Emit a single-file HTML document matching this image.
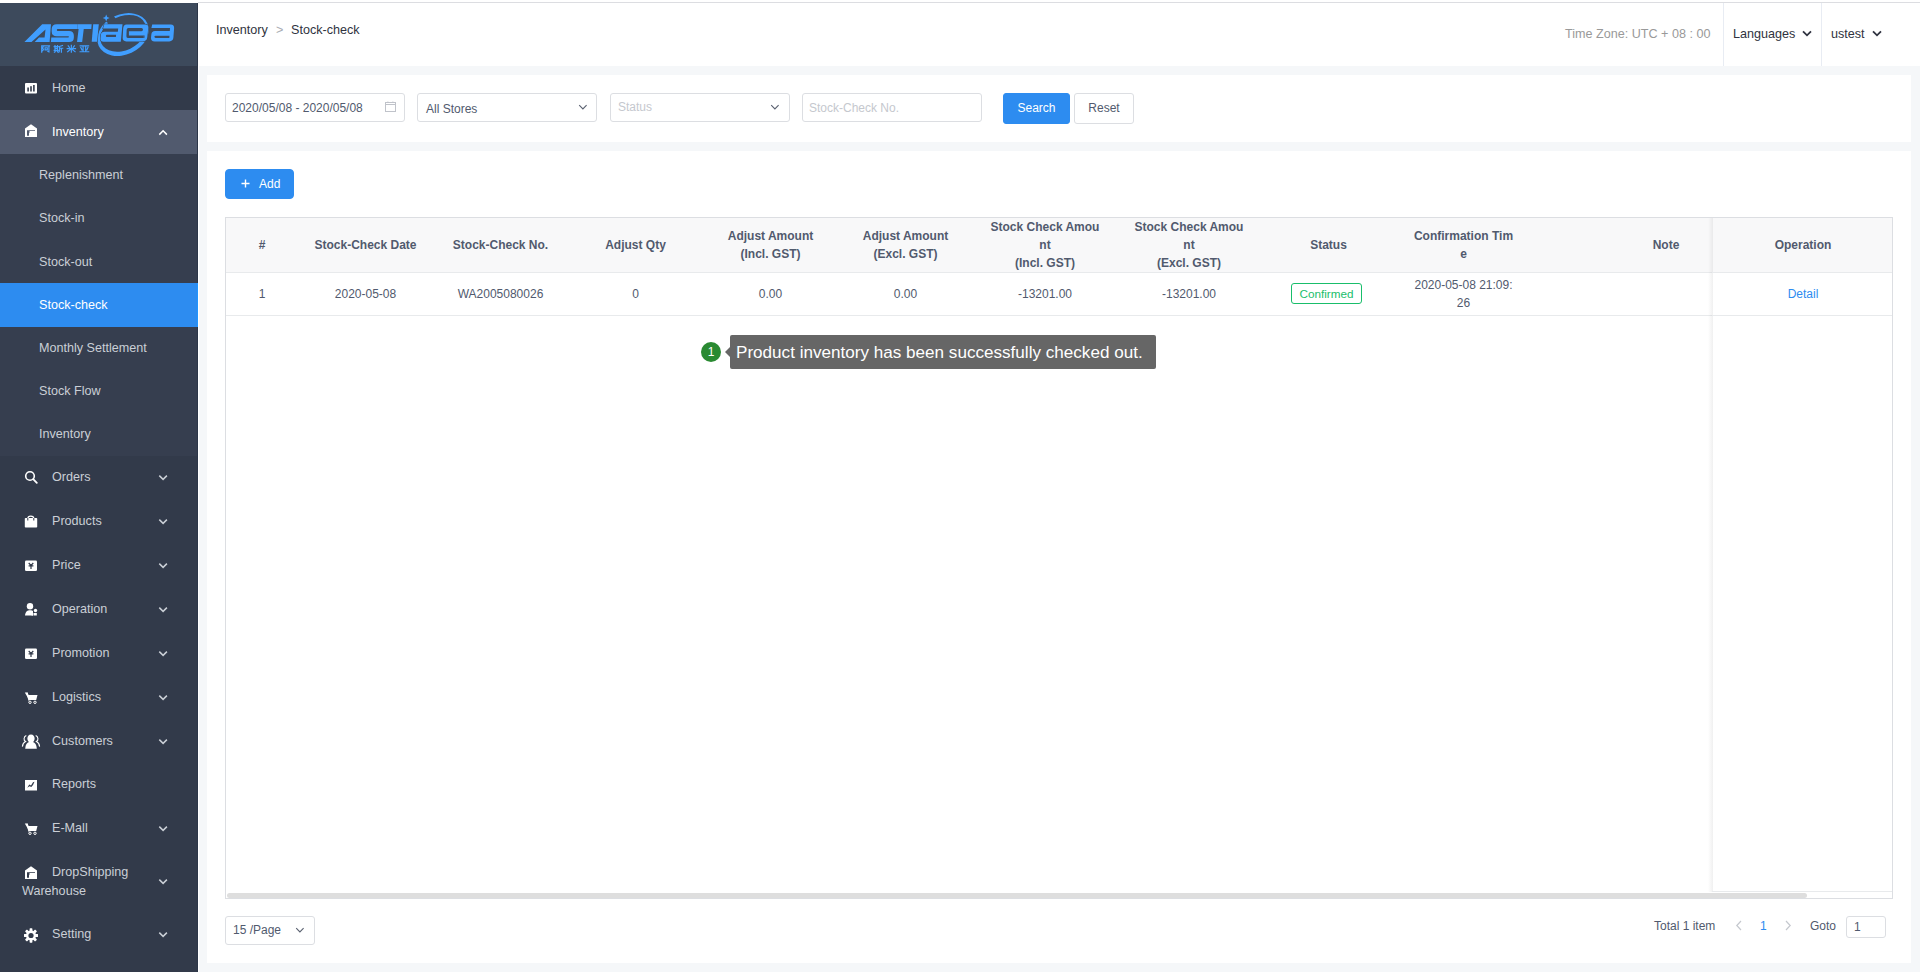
<!DOCTYPE html>
<html><head><meta charset="utf-8"><style>
*{box-sizing:border-box;margin:0;padding:0}
html,body{width:1920px;height:972px;overflow:hidden;background:#f5f7f9;font-family:"Liberation Sans",sans-serif;position:relative}
.a{position:absolute;white-space:nowrap}
.mt{position:absolute;font-size:12.6px;line-height:15px;color:#cacfd6}
</style></head><body>
<div class="a" style="left:0;top:0;width:1920px;height:3px;background:#fff"></div>
<div class="a" style="left:198px;top:2px;width:1722px;height:1px;background:#dcdde1"></div>
<div class="a" style="left:0;top:3px;width:198px;height:969px;background:#323a4a"></div>
<div class="a" style="left:0;top:3px;width:198px;height:63px;background:#3d4a5c"></div>
<div class="a" style="left:0;top:110px;width:198px;height:44px;background:#515a6e"></div>
<div class="a" style="left:0;top:154px;width:198px;height:302px;background:#363e4f"></div>
<div class="a" style="left:0;top:283px;width:198px;height:44px;background:#2d8cf0"></div>
<div class="a" style="left:197px;top:3px;width:1px;height:969px;background:#2c3648"></div>
<div class="a" style="left:197px;top:283px;width:1px;height:44px;background:#2196ff"></div>
<div class="a" style="left:198px;top:3px;width:1px;height:969px;background:#ffffff"></div>
<svg class="a" style="left:24px;top:80.5px" width="14" height="15" viewBox="0 0 14 15"><rect x="1" y="2" width="12" height="10.5" rx="1" fill="#fff"/><rect x="3.3" y="6.5" width="1.6" height="4" fill="#323a4a"/><rect x="6.2" y="5.2" width="1.6" height="5.3" fill="#323a4a"/><rect x="9.1" y="4" width="1.6" height="6.5" fill="#323a4a"/></svg><div class="mt" style="left:52px;top:80.6px;color:#cacfd6">Home</div>
<svg class="a" style="left:24px;top:123.0px" width="14" height="15" viewBox="0 0 14 15"><path d="M1 5.4 L7 1.3 L13 5.4 V14 H1 Z" fill="#fff"/><path d="M3 7.2 H11 V8 H5.5 V9.8 H5 V12.8 H3 Z" fill="#515a6e"/></svg><div class="mt" style="left:52px;top:124.6px;color:#ffffff">Inventory</div><svg class="a" style="left:158px;top:129.3px" width="10" height="7" viewBox="0 0 10 7"><path d="M1.3 5.6 L5.1 1.8 L8.9 5.6" fill="none" stroke="#ffffff" stroke-width="1.5"/></svg>
<svg class="a" style="left:24px;top:469.5px" width="14" height="15" viewBox="0 0 14 15"><circle cx="6" cy="6" r="4.3" fill="none" stroke="#fff" stroke-width="1.6"/><path d="M9.2 9.2 L12.8 12.8" stroke="#fff" stroke-width="1.8" stroke-linecap="round"/></svg><div class="mt" style="left:52px;top:469.6px;color:#cacfd6">Orders</div><svg class="a" style="left:158px;top:474.0px" width="10" height="7" viewBox="0 0 10 7"><path d="M1.3 1.6 L5.1 5.4 L8.9 1.6" fill="none" stroke="#cacfd6" stroke-width="1.5"/></svg>
<svg class="a" style="left:24px;top:513.5px" width="14" height="15" viewBox="0 0 14 15"><rect x="0.8" y="4" width="12.4" height="9.5" rx="0.8" fill="#fff"/><path d="M3.8 7 V4.5 C3.8 1.2 9.8 1.2 9.8 4.5 V7" fill="none" stroke="#fff" stroke-width="1.2"/><path d="M3.8 4 V6.5 M9.8 4 V6.5" stroke="#323a4a" stroke-width="1"/></svg><div class="mt" style="left:52px;top:513.6px;color:#cacfd6">Products</div><svg class="a" style="left:158px;top:518.0px" width="10" height="7" viewBox="0 0 10 7"><path d="M1.3 1.6 L5.1 5.4 L8.9 1.6" fill="none" stroke="#cacfd6" stroke-width="1.5"/></svg>
<svg class="a" style="left:24px;top:557.5px" width="14" height="15" viewBox="0 0 14 15"><rect x="1" y="2.5" width="12" height="10.5" rx="1.3" fill="#fff"/><path d="M4.7 5 L7 7.3 L9.3 5 M4.6 7.9 H9.4 M7 7.3 V11" stroke="#323a4a" stroke-width="1.2" fill="none"/></svg><div class="mt" style="left:52px;top:557.6px;color:#cacfd6">Price</div><svg class="a" style="left:158px;top:562.0px" width="10" height="7" viewBox="0 0 10 7"><path d="M1.3 1.6 L5.1 5.4 L8.9 1.6" fill="none" stroke="#cacfd6" stroke-width="1.5"/></svg>
<svg class="a" style="left:24px;top:601.5px" width="14" height="15" viewBox="0 0 14 15"><circle cx="6" cy="4.3" r="3.2" fill="#fff"/><path d="M1 13.5 C1.5 9.5 3.5 8.3 6 8.3 C7.5 8.3 8.5 8.6 9 9 V13.5 Z" fill="#fff"/><circle cx="11.5" cy="8.5" r="1.7" fill="#fff"/><rect x="10" y="11" width="2.8" height="2.5" fill="#fff"/><rect x="7.5" y="11" width="2" height="2.5" fill="#fff"/></svg><div class="mt" style="left:52px;top:601.6px;color:#cacfd6">Operation</div><svg class="a" style="left:158px;top:606.0px" width="10" height="7" viewBox="0 0 10 7"><path d="M1.3 1.6 L5.1 5.4 L8.9 1.6" fill="none" stroke="#cacfd6" stroke-width="1.5"/></svg>
<svg class="a" style="left:24px;top:645.5px" width="14" height="15" viewBox="0 0 14 15"><rect x="1" y="2.5" width="12" height="10.5" rx="1.3" fill="#fff"/><path d="M4.7 5 L7 7.3 L9.3 5 M4.6 7.9 H9.4 M7 7.3 V11" stroke="#323a4a" stroke-width="1.2" fill="none"/></svg><div class="mt" style="left:52px;top:645.6px;color:#cacfd6">Promotion</div><svg class="a" style="left:158px;top:650.0px" width="10" height="7" viewBox="0 0 10 7"><path d="M1.3 1.6 L5.1 5.4 L8.9 1.6" fill="none" stroke="#cacfd6" stroke-width="1.5"/></svg>
<svg class="a" style="left:24px;top:689.5px" width="14" height="15" viewBox="0 0 14 15"><path d="M0.8 2.5 H3.5 L4.5 5 H13.5 L12.2 10 H5.2 Z" fill="#fff"/><path d="M3 2.6 L5 10.5" stroke="#fff" stroke-width="1.2"/><circle cx="6" cy="12.3" r="1.2" fill="none" stroke="#fff" stroke-width="1"/><circle cx="11" cy="12.3" r="1.2" fill="none" stroke="#fff" stroke-width="1"/></svg><div class="mt" style="left:52px;top:689.6px;color:#cacfd6">Logistics</div><svg class="a" style="left:158px;top:694.0px" width="10" height="7" viewBox="0 0 10 7"><path d="M1.3 1.6 L5.1 5.4 L8.9 1.6" fill="none" stroke="#cacfd6" stroke-width="1.5"/></svg>
<svg class="a" style="left:20px;top:732.7px" width="22" height="17" viewBox="0 0 22 17"><path d="M11 1.6 C13.3 1.6 14.6 3.4 14.6 5.6 C14.6 7.2 13.9 8.4 13.2 9 L8.8 9 C8.1 8.4 7.4 7.2 7.4 5.6 C7.4 3.4 8.7 1.6 11 1.6 Z" fill="#fff"/><path d="M5.2 15.8 C5.4 11.6 7 9.6 9 9 L13 9 C15 9.6 16.6 11.6 16.8 15.8 Z" fill="#fff"/><path d="M6.3 2.6 C3.6 3.5 3.3 7.4 5.6 8.6 C3.4 9.6 2.6 11.5 2.4 13.6" fill="none" stroke="#fff" stroke-width="1.1"/><path d="M15.7 2.6 C18.4 3.5 18.7 7.4 16.4 8.6 C18.6 9.6 19.4 11.5 19.6 13.6" fill="none" stroke="#fff" stroke-width="1.1"/></svg><div class="mt" style="left:52px;top:733.6px;color:#cacfd6">Customers</div><svg class="a" style="left:158px;top:738.0px" width="10" height="7" viewBox="0 0 10 7"><path d="M1.3 1.6 L5.1 5.4 L8.9 1.6" fill="none" stroke="#cacfd6" stroke-width="1.5"/></svg>
<svg class="a" style="left:24px;top:776.5px" width="14" height="15" viewBox="0 0 14 15"><rect x="1" y="3" width="12" height="10.5" fill="#fff"/><path d="M3.3 10.8 L5.2 7.5 L7 8.5 L9 5.3 L10.5 4.8 L9 8 L7.3 10 L5.5 9.2 Z" fill="#323a4a"/></svg><div class="mt" style="left:52px;top:776.6px;color:#cacfd6">Reports</div>
<svg class="a" style="left:24px;top:820.5px" width="14" height="15" viewBox="0 0 14 15"><path d="M0.8 2.5 H3.5 L4.5 5 H13.5 L12.2 10 H5.2 Z" fill="#fff"/><path d="M3 2.6 L5 10.5" stroke="#fff" stroke-width="1.2"/><circle cx="6" cy="12.3" r="1.2" fill="none" stroke="#fff" stroke-width="1"/><circle cx="11" cy="12.3" r="1.2" fill="none" stroke="#fff" stroke-width="1"/></svg><div class="mt" style="left:52px;top:820.6px;color:#cacfd6">E-Mall</div><svg class="a" style="left:158px;top:825.0px" width="10" height="7" viewBox="0 0 10 7"><path d="M1.3 1.6 L5.1 5.4 L8.9 1.6" fill="none" stroke="#cacfd6" stroke-width="1.5"/></svg>
<svg class="a" style="left:24px;top:927.5px" width="14" height="15" viewBox="0 0 14 15"><g transform="translate(7 7.5)"><circle r="5" fill="#fff"/><rect x="-1.4" y="-7.2" width="2.8" height="3.5" rx="0.6" fill="#fff" transform="rotate(0)"/><rect x="-1.4" y="-7.2" width="2.8" height="3.5" rx="0.6" fill="#fff" transform="rotate(45)"/><rect x="-1.4" y="-7.2" width="2.8" height="3.5" rx="0.6" fill="#fff" transform="rotate(90)"/><rect x="-1.4" y="-7.2" width="2.8" height="3.5" rx="0.6" fill="#fff" transform="rotate(135)"/><rect x="-1.4" y="-7.2" width="2.8" height="3.5" rx="0.6" fill="#fff" transform="rotate(180)"/><rect x="-1.4" y="-7.2" width="2.8" height="3.5" rx="0.6" fill="#fff" transform="rotate(225)"/><rect x="-1.4" y="-7.2" width="2.8" height="3.5" rx="0.6" fill="#fff" transform="rotate(270)"/><rect x="-1.4" y="-7.2" width="2.8" height="3.5" rx="0.6" fill="#fff" transform="rotate(315)"/><circle r="2.6" fill="#323a4a"/></g></svg><div class="mt" style="left:52px;top:926.6px;color:#cacfd6">Setting</div><svg class="a" style="left:158px;top:931.0px" width="10" height="7" viewBox="0 0 10 7"><path d="M1.3 1.6 L5.1 5.4 L8.9 1.6" fill="none" stroke="#cacfd6" stroke-width="1.5"/></svg>
<svg class="a" style="left:24px;top:864.5px" width="14" height="15" viewBox="0 0 14 15"><path d="M1 5.4 L7 1.3 L13 5.4 V14 H1 Z" fill="#fff"/><path d="M3 7.2 H11 V8 H5.5 V9.8 H5 V12.8 H3 Z" fill="#323a4a"/></svg>
<div class="mt" style="left:52px;top:864.5px">DropShipping</div>
<div class="mt" style="left:22px;top:883.5px">Warehouse</div>
<svg class="a" style="left:158px;top:878px" width="10" height="7" viewBox="0 0 10 7"><path d="M1.3 1.6 L5.1 5.4 L8.9 1.6" fill="none" stroke="#cacfd6" stroke-width="1.5"/></svg>
<div class="mt" style="left:39px;top:168.2px;color:#cacfd6">Replenishment</div>
<div class="mt" style="left:39px;top:211.3px;color:#cacfd6">Stock-in</div>
<div class="mt" style="left:39px;top:254.5px;color:#cacfd6">Stock-out</div>
<div class="mt" style="left:39px;top:297.6px;color:#ffffff">Stock-check</div>
<div class="mt" style="left:39px;top:340.7px;color:#cacfd6">Monthly Settlement</div>
<div class="mt" style="left:39px;top:383.9px;color:#cacfd6">Stock Flow</div>
<div class="mt" style="left:39px;top:427.0px;color:#cacfd6">Inventory</div>
<svg class="a" style="left:0;top:0" width="198" height="66" viewBox="0 0 198 66"><g transform="rotate(-25 123 34.55)"><path d="M96.2,34.55 A26.8,20.1 0 1 0 149.8,34.55 A26.8,20.1 0 1 0 96.2,34.55 Z M99.6,33.5 A24,16.9 0 1 0 147.6,33.5 A24,16.9 0 1 0 99.6,33.5 Z" fill="#409eff" fill-rule="evenodd"/></g><path d="M104.6,20.6 L112.6,14.4 L116.4,19.6 L108.6,23.6 Z" fill="#3d4a5c"/><path d="M24.4,42 L42.2,24.2 L51.0,24.2 L49.6,42 L34.7,42 L39,37.6 L44.6,37.6 L45.5,29.5 L31.5,42 Z" fill="#409eff"/><g transform="translate(22 20) scale(0.03959)"><path d="M880,105 H1400 V230 H900 Q880,230 880,252 Q880,275 900,275 H1190 Q1310,275 1310,400 V440 Q1310,555 1190,555 H730 L740,440 H1160 Q1190,440 1190,425 Q1190,410 1160,410 H880 Q750,410 750,290 V225 Q750,105 880,105 Z" fill="#409eff"/><path d="M1400,105 H1760 L1750,230 H1560 L1520,555 H1390 L1430,230 H1400 Z" fill="#409eff"/></g><path d="M93.2,24.3 L98.8,24.3 L97.1,41.7 L91.7,41.7 Z" fill="#409eff" fill-rule="evenodd" stroke="#3d4a5c" stroke-width="1.1" paint-order="stroke"/><path d="M104.3,24.3 H122.5 L120.8,41.7 H103.5 Q100.3,41.7 100.5,38.5 L100.8,35 Q101.2,31.7 104.5,31.7 H117.8 L118.2,28.5 H103 Z M106.8,34.7 H116.1 L115.9,36.9 H106.5 Q105.8,36.9 105.9,35.8 Q106,34.7 106.8,34.7 Z" fill="#409eff" fill-rule="evenodd" stroke="#3d4a5c" stroke-width="1.1" paint-order="stroke"/><path d="M126.5,24.4 H145.2 Q148.6,24.4 148.3,27.8 L147.2,37.6 Q146.8,41.4 142.8,41.4 H126.2 Q122.4,41.4 122.7,37.6 L123.2,28.2 Q123.5,24.4 126.5,24.4 Z M128.4,27.9 H141.4 Q143,27.9 143,29.6 Q143,31.3 141.4,31.3 H128.9 V35.6 H144.6 L144.4,37.9 H127.9 Q126.3,37.9 126.4,36.2 L126.7,29.6 Q126.8,27.9 128.4,27.9 Z" fill="#409eff" fill-rule="evenodd" stroke="#3d4a5c" stroke-width="1.1" paint-order="stroke"/><path d="M152.2,24.4 H170.8 Q174.4,24.4 174.1,28.2 L173.4,37.6 Q173.1,41.4 169.3,41.4 H154.6 Q150.8,41.4 151,37.8 L151.3,34.8 Q151.6,31.1 155,31.1 H169.8 L170,28.1 H151.4 Z M155.6,35.7 H169.5 L169.3,38 H155.6 Q154.4,38 154.4,36.85 Q154.4,35.7 155.6,35.7 Z" fill="#409eff" fill-rule="evenodd" stroke="#3d4a5c" stroke-width="1.1" paint-order="stroke"/><path d="M106.2,14.4 L107.2,16.9 L109.7,17.9 L107.2,18.9 L106.2,21.4 L105.2,18.9 L102.7,17.9 L105.2,16.9 Z" fill="#409eff"/><g stroke="#409eff" stroke-width="1.2" fill="none" stroke-linecap="square"><path d="M41.7,52.05 V45.75 H43.5 L42.7,48.05 L43.5,49.65 L42.5,50.65"/><path d="M44.4,45.85 H49.5 M48.9,45.85 V51.85 L47.9,51.55 M45.1,47.75 H47.300000000000004 V49.85 H45.1 Z"/><path d="M55.0,45.55 V51.45 M57.5,45.55 V51.45 M54.2,46.65 H58.3 M55.0,48.45 H57.5 M54.2,50.45 H58.3 M55.2,51.65 L54.4,52.15 M57.3,51.65 L58.1,52.15"/><path d="M62.5,45.55 L59.6,46.45 V49.25 Q59.6,51.25 58.9,52.05 M59.6,48.25 H62.7 M61.4,48.25 V52.15"/><path d="M71.35,45.45 V52.15 M67.2,48.55 H75.5 M68.2,45.85 L69.4,47.45 M74.4,45.85 L73.2,47.45 M71.0,48.85 L67.6,51.75 M71.7,48.85 L75.1,51.75"/><path d="M80.2,45.85 H88.60000000000001 M80.10000000000001,51.75 H88.7 M83.10000000000001,45.85 V51.75 M85.7,45.85 V51.75 M80.80000000000001,47.45 L81.9,49.85 M87.9,47.45 L86.80000000000001,49.85"/></g></svg>
<div class="a" style="left:198px;top:3px;width:1722px;height:63px;background:#fff"></div>
<div class="a" style="left:207px;top:75px;width:1704px;height:67px;background:#fff"></div>
<div class="a" style="left:207px;top:151px;width:1704px;height:812px;background:#fff"></div>
<div class="a" style="left:216px;top:21.63px;font-size:12.6px;line-height:16px;color:#303340;font-weight:normal;">Inventory</div>
<div class="a" style="left:276px;top:21.63px;font-size:12.6px;line-height:16px;color:#a8abb2;font-weight:normal;">&gt;</div>
<div class="a" style="left:291px;top:21.63px;font-size:12.6px;line-height:16px;color:#303340;font-weight:normal;">Stock-check</div>
<div class="a" style="left:1565px;top:25.63px;font-size:12.6px;line-height:16px;color:#999999;font-weight:normal;">Time Zone: UTC + 08 : 00</div>
<div class="a" style="left:1723px;top:3px;width:1px;height:63px;background:#e8ecf3"></div>
<div class="a" style="left:1821px;top:3px;width:1px;height:63px;background:#e8ecf3"></div>
<div class="a" style="left:1733px;top:25.63px;font-size:12.6px;line-height:16px;color:#303340;font-weight:normal;">Languages</div>
<div class="a" style="left:1831px;top:25.63px;font-size:12.6px;line-height:16px;color:#303340;font-weight:normal;">ustest</div>
<svg class="a" style="left:1802px;top:30px" width="10" height="7" viewBox="0 0 10 7"><path d="M1 1.3 L5 5.3 L9 1.3" fill="none" stroke="#303340" stroke-width="1.8"/></svg>
<svg class="a" style="left:1872px;top:30px" width="10" height="7" viewBox="0 0 10 7"><path d="M1 1.3 L5 5.3 L9 1.3" fill="none" stroke="#303340" stroke-width="1.8"/></svg>
<div class="a" style="left:225px;top:93px;width:180px;height:29px;border:1px solid #dcdee2;background:#fff;border-radius:3px"></div>
<div class="a" style="left:232px;top:99.84px;font-size:12px;line-height:16px;color:#515a6e;font-weight:normal;">2020/05/08 - 2020/05/08</div>
<svg class="a" style="left:384px;top:100px" width="13" height="13" viewBox="0 0 13 13"><rect x="1.5" y="2.5" width="10" height="9" fill="none" stroke="#c0c3ca" stroke-width="1"/><path d="M1.5 4.5 H11.5 M3.9 1.5 V3 M8.9 1.5 V3" stroke="#c0c3ca" stroke-width="1"/></svg>
<div class="a" style="left:417px;top:93px;width:180px;height:29px;border:1px solid #dcdee2;background:#fff;border-radius:3px"></div>
<div class="a" style="left:426px;top:100.84px;font-size:12px;line-height:16px;color:#515a6e;font-weight:normal;">All Stores</div>
<svg class="a" style="left:578.4px;top:104px" width="10" height="7" viewBox="0 0 10 7"><path d="M1.2 1.2 L4.9 4.9 L8.6 1.2" fill="none" stroke="#5a6170" stroke-width="1.1"/></svg>
<div class="a" style="left:610px;top:93px;width:180px;height:29px;border:1px solid #dcdee2;background:#fff;border-radius:3px"></div>
<div class="a" style="left:618px;top:98.84px;font-size:12px;line-height:16px;color:#c5c8ce;font-weight:normal;">Status</div>
<svg class="a" style="left:770.4px;top:104px" width="10" height="7" viewBox="0 0 10 7"><path d="M1.2 1.2 L4.9 4.9 L8.6 1.2" fill="none" stroke="#5a6170" stroke-width="1.1"/></svg>
<div class="a" style="left:802px;top:93px;width:180px;height:29px;border:1px solid #dcdee2;background:#fff;border-radius:3px"></div>
<div class="a" style="left:809px;top:99.84px;font-size:12px;line-height:16px;color:#c5c8ce;font-weight:normal;">Stock-Check No.</div>
<div class="a" style="left:1003px;top:93px;width:67px;height:31px;border:1px solid #2d8cf0;background:#2d8cf0;border-radius:3px"></div>
<div class="a" style="left:1003.0px;top:99.84px;width:67px;text-align:center;font-size:12px;line-height:16px;color:#ffffff;font-weight:normal">Search</div>
<div class="a" style="left:1074px;top:93px;width:60px;height:31px;border:1px solid #dcdee2;background:#fff;border-radius:3px"></div>
<div class="a" style="left:1074.0px;top:99.84px;width:60px;text-align:center;font-size:12px;line-height:16px;color:#515a6e;font-weight:normal">Reset</div>
<div class="a" style="left:225px;top:169px;width:69px;height:30px;border:1px solid #2d8cf0;background:#2d8cf0;border-radius:4px"></div>
<svg class="a" style="left:240px;top:178px" width="11" height="11" viewBox="0 0 11 11"><path d="M5.5 1.5 V9.5 M1.5 5.5 H9.5" stroke="#fff" stroke-width="1.4"/></svg>
<div class="a" style="left:259px;top:175.84px;font-size:12px;line-height:16px;color:#ffffff;font-weight:normal;">Add</div>
<div class="a" style="left:225px;top:217px;width:1668px;height:682px;border:1px solid #dcdee2;background:#fff"></div>
<div class="a" style="left:226px;top:218px;width:1666px;height:54px;background:#f8f8f9"></div>
<div class="a" style="left:226px;top:272px;width:1666px;height:1px;background:#e8eaec"></div>
<div class="a" style="left:226px;top:315px;width:1666px;height:1px;background:#e8eaec"></div>
<div class="a" style="left:162.0px;top:236.84px;width:200px;text-align:center;font-size:12px;line-height:16px;color:#515a6e;font-weight:bold">#</div>
<div class="a" style="left:265.5px;top:236.84px;width:200px;text-align:center;font-size:12px;line-height:16px;color:#515a6e;font-weight:bold">Stock-Check Date</div>
<div class="a" style="left:400.5px;top:236.84px;width:200px;text-align:center;font-size:12px;line-height:16px;color:#515a6e;font-weight:bold">Stock-Check No.</div>
<div class="a" style="left:535.5px;top:236.84px;width:200px;text-align:center;font-size:12px;line-height:16px;color:#515a6e;font-weight:bold">Adjust Qty</div>
<div class="a" style="left:670.5px;top:227.84px;width:200px;text-align:center;font-size:12px;line-height:16px;color:#515a6e;font-weight:bold">Adjust Amount</div><div class="a" style="left:670.5px;top:245.84px;width:200px;text-align:center;font-size:12px;line-height:16px;color:#515a6e;font-weight:bold">(Incl. GST)</div>
<div class="a" style="left:805.5px;top:227.84px;width:200px;text-align:center;font-size:12px;line-height:16px;color:#515a6e;font-weight:bold">Adjust Amount</div><div class="a" style="left:805.5px;top:245.84px;width:200px;text-align:center;font-size:12px;line-height:16px;color:#515a6e;font-weight:bold">(Excl. GST)</div>
<div class="a" style="left:945.0px;top:218.84px;width:200px;text-align:center;font-size:12px;line-height:16px;color:#515a6e;font-weight:bold">Stock Check Amou</div><div class="a" style="left:945.0px;top:236.84px;width:200px;text-align:center;font-size:12px;line-height:16px;color:#515a6e;font-weight:bold">nt</div><div class="a" style="left:945.0px;top:254.84px;width:200px;text-align:center;font-size:12px;line-height:16px;color:#515a6e;font-weight:bold">(Incl. GST)</div>
<div class="a" style="left:1089.0px;top:218.84px;width:200px;text-align:center;font-size:12px;line-height:16px;color:#515a6e;font-weight:bold">Stock Check Amou</div><div class="a" style="left:1089.0px;top:236.84px;width:200px;text-align:center;font-size:12px;line-height:16px;color:#515a6e;font-weight:bold">nt</div><div class="a" style="left:1089.0px;top:254.84px;width:200px;text-align:center;font-size:12px;line-height:16px;color:#515a6e;font-weight:bold">(Excl. GST)</div>
<div class="a" style="left:1228.5px;top:236.84px;width:200px;text-align:center;font-size:12px;line-height:16px;color:#515a6e;font-weight:bold">Status</div>
<div class="a" style="left:1363.5px;top:227.84px;width:200px;text-align:center;font-size:12px;line-height:16px;color:#515a6e;font-weight:bold">Confirmation Tim</div><div class="a" style="left:1363.5px;top:245.84px;width:200px;text-align:center;font-size:12px;line-height:16px;color:#515a6e;font-weight:bold">e</div>
<div class="a" style="left:1566.0px;top:236.84px;width:200px;text-align:center;font-size:12px;line-height:16px;color:#515a6e;font-weight:bold">Note</div>
<div class="a" style="left:162.0px;top:285.84px;width:200px;text-align:center;font-size:12px;line-height:16px;color:#515a6e;font-weight:normal">1</div>
<div class="a" style="left:265.5px;top:285.84px;width:200px;text-align:center;font-size:12px;line-height:16px;color:#515a6e;font-weight:normal">2020-05-08</div>
<div class="a" style="left:400.5px;top:285.84px;width:200px;text-align:center;font-size:12px;line-height:16px;color:#515a6e;font-weight:normal">WA2005080026</div>
<div class="a" style="left:535.5px;top:285.84px;width:200px;text-align:center;font-size:12px;line-height:16px;color:#515a6e;font-weight:normal">0</div>
<div class="a" style="left:670.5px;top:285.84px;width:200px;text-align:center;font-size:12px;line-height:16px;color:#515a6e;font-weight:normal">0.00</div>
<div class="a" style="left:805.5px;top:285.84px;width:200px;text-align:center;font-size:12px;line-height:16px;color:#515a6e;font-weight:normal">0.00</div>
<div class="a" style="left:945.0px;top:285.84px;width:200px;text-align:center;font-size:12px;line-height:16px;color:#515a6e;font-weight:normal">-13201.00</div>
<div class="a" style="left:1089.0px;top:285.84px;width:200px;text-align:center;font-size:12px;line-height:16px;color:#515a6e;font-weight:normal">-13201.00</div>
<div class="a" style="left:1291px;top:283px;width:71px;height:21px;border:1px solid #19be6b;border-radius:3px;background:#fff"></div>
<div class="a" style="left:1291.0px;top:285.95px;width:71px;text-align:center;font-size:11.7px;line-height:16px;color:#19be6b;font-weight:normal">Confirmed</div>
<div class="a" style="left:1363.5px;top:276.84px;width:200px;text-align:center;font-size:12px;line-height:16px;color:#515a6e;font-weight:normal">2020-05-08 21:09:</div>
<div class="a" style="left:1363.5px;top:294.84px;width:200px;text-align:center;font-size:12px;line-height:16px;color:#515a6e;font-weight:normal">26</div>
<div class="a" style="left:1708px;top:218px;width:5px;height:674px;background:linear-gradient(to left, rgba(0,0,0,0.06), rgba(0,0,0,0))"></div>
<div class="a" style="left:1713px;top:218px;width:179px;height:674px;background:#fff"></div>
<div class="a" style="left:1713px;top:218px;width:179px;height:54px;background:#f8f8f9"></div>
<div class="a" style="left:1712px;top:272px;width:180px;height:1px;background:#e8eaec"></div>
<div class="a" style="left:1712px;top:315px;width:180px;height:1px;background:#e8eaec"></div>
<div class="a" style="left:1712px;top:891px;width:180px;height:1px;background:#e8eaec"></div>
<div class="a" style="left:1703.0px;top:236.84px;width:200px;text-align:center;font-size:12px;line-height:16px;color:#515a6e;font-weight:bold">Operation</div>
<div class="a" style="left:1753.0px;top:285.84px;width:100px;text-align:center;font-size:12px;line-height:16px;color:#2d8cf0;font-weight:normal">Detail</div>
<div class="a" style="left:227px;top:893px;width:1580px;height:5px;background:#dedede;border-radius:3px"></div>
<div class="a" style="left:225px;top:916px;width:90px;height:29px;border:1px solid #dcdee2;background:#fff;border-radius:3px"></div>
<div class="a" style="left:233px;top:921.84px;font-size:12px;line-height:16px;color:#515a6e;font-weight:normal;">15 /Page</div>
<svg class="a" style="left:295.4px;top:927px" width="10" height="7" viewBox="0 0 10 7"><path d="M1.2 1.2 L4.9 4.9 L8.6 1.2" fill="none" stroke="#5a6170" stroke-width="1.1"/></svg>
<div class="a" style="left:1654px;top:917.84px;font-size:12px;line-height:16px;color:#515a6e;font-weight:normal;">Total 1 item</div>
<svg class="a" style="left:1735px;top:920px" width="8" height="11" viewBox="0 0 8 11"><path d="M6 1 L1.8 5.5 L6 10" fill="none" stroke="#c5c8ce" stroke-width="1.2"/></svg>
<div class="a" style="left:1760px;top:917.84px;font-size:12px;line-height:16px;color:#2d8cf0;font-weight:normal;">1</div>
<svg class="a" style="left:1784px;top:920px" width="8" height="11" viewBox="0 0 8 11"><path d="M2 1 L6.2 5.5 L2 10" fill="none" stroke="#c5c8ce" stroke-width="1.2"/></svg>
<div class="a" style="left:1810px;top:917.84px;font-size:12px;line-height:16px;color:#515a6e;font-weight:normal;">Goto</div>
<div class="a" style="left:1846px;top:916px;width:40px;height:22px;border:1px solid #dcdee2;background:#fff;border-radius:3px"></div>
<div class="a" style="left:1854px;top:918.84px;font-size:12px;line-height:16px;color:#515a6e;font-weight:normal;">1</div>
<div class="a" style="left:701px;top:342px;width:20px;height:20px;border-radius:50%;background:#2a8a32"></div>
<div class="a" style="left:701.0px;top:343.84px;width:20px;text-align:center;font-size:12px;line-height:16px;color:#ffffff;font-weight:normal">1</div>
<div class="a" style="left:730px;top:335px;width:426px;height:34px;background:#666666;border-radius:2px"></div>
<svg class="a" style="left:724px;top:346px" width="7" height="12" viewBox="0 0 7 12"><path d="M7 0 L1 6 L7 12 Z" fill="#666666"/></svg>
<div class="a" style="left:736px;top:345.07px;font-size:17.1px;line-height:16px;color:#ffffff;font-weight:normal;">Product inventory has been successfully checked out.</div>
</body></html>
